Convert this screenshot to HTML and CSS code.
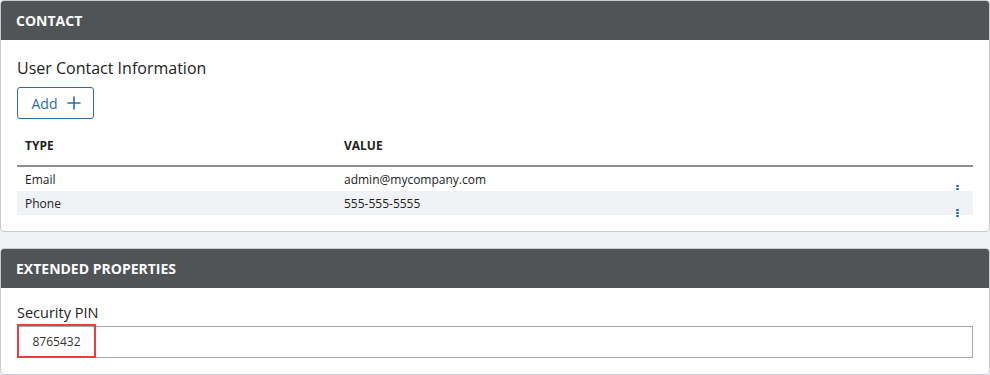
FILE: index.html
```html
<!DOCTYPE html>
<html lang="en">
  <head>
    <title>User Properties</title>
    <meta charset="utf-8" />
    <link rel="stylesheet" href="styles.css">
  </head>
  <body>
    <section class="panel contact">
      <h2 class="panel_title">CONTACT</h2>
      <div class="panel_body">
        <h3 class="sub_title">User Contact Information</h3>
        <button type="button" class="add_button">Add
          <svg class="plus" width="14" height="14" viewBox="0 0 14 14"><path d="M7 0.5V13.5M0.5 7H13.5" stroke="#2c6ca6" stroke-width="1.6" fill="none"/></svg>
        </button>
        <table class="contacts">
          <thead>
            <tr>
              <th class="col_type">TYPE</th>
              <th>VALUE</th>
              <th class="col_menu"></th>
            </tr>
          </thead>
          <tbody>
            <tr>
              <td>Email</td>
              <td>admin@mycompany.com</td>
              <td class="col_menu"><span class="kebab"><i></i><i></i><i></i></span></td>
            </tr>
            <tr class="alt">
              <td>Phone</td>
              <td>555-555-5555</td>
              <td class="col_menu"><span class="kebab"><i></i><i></i><i></i></span></td>
            </tr>
          </tbody>
        </table>
      </div>
    </section>

    <section class="panel extended">
      <h2 class="panel_title">EXTENDED PROPERTIES</h2>
      <div class="panel_body">
        <label class="field_label" for="pin">Security PIN</label>
        <div class="field">
          <span class="pin_value" id="pin">8765432</span>
        </div>
      </div>
    </section>
  </body>
</html>
```

FILE: styles.css
```css
body {
  margin: 0;
  width: 990px;
  background: #f1f2f6;
  font-family: "Open Sans", "Liberation Sans", sans-serif;
  color: #222;
}

.panel {
  background: #fff;
  border: 1px solid #c9cbd0;
  border-radius: 4px;
  overflow: hidden;
}

.contact {
  height: 232px;
  box-sizing: border-box;
}

.extended {
  margin-top: 16px;
  height: 127px;
  box-sizing: border-box;
}

.panel_title {
  margin: -1px -1px 0;
  height: 40px;
  padding: 0 16px;
  display: flex;
  align-items: center;
  background: #505457;
  color: #fff;
  font-size: 14px;
  font-weight: 700;
}

.panel_body {
  padding: 0 16px;
}

.sub_title {
  margin: 17px 0 0;
  font-size: 16px;
  font-weight: 400;
  line-height: 22px;
  color: #222;
}

.add_button {
  margin-top: 8px;
  width: 77px;
  height: 32px;
  border: 1px solid #2c6ca6;
  border-radius: 3px;
  background: #fff;
  color: #2c6ca6;
  font-family: inherit;
  font-size: 14px;
  padding: 0 0 0 2px;
  display: flex;
  align-items: center;
  justify-content: center;
  gap: 10px;
}

.contacts {
  width: 956px;
  margin-top: 14px;
  border-collapse: collapse;
  font-size: 12px;
}

.contacts th {
  text-align: left;
  font-weight: 700;
  font-size: 12px;
  line-height: 17px;
  height: 21px;
  padding: 0 8px 11px;
  vertical-align: bottom;
  border-bottom: 2px solid #8d8d95;
}

.contacts td {
  height: 24px;
  padding: 0 8px;
  vertical-align: middle;
}

.col_type {
  width: 303px;
}

.col_menu {
  width: 25px;
  position: relative;
}

.alt td {
  background: #f1f2f6;
}

.kebab {
  position: absolute;
  right: 14px;
  top: 18px;
  display: flex;
  flex-direction: column;
  gap: 1px;
}

.kebab i {
  display: block;
  width: 3px;
  height: 2px;
  border-radius: 1px;
  background: #1f68ad;
}

.field_label {
  display: block;
  margin-top: 15px;
  font-size: 14.5px;
  line-height: 20px;
}

.field {
  margin-top: 3px;
  height: 32px;
  box-sizing: border-box;
  border: 1px solid #a3a8b0;
  display: flex;
  align-items: center;
}

.pin_value {
  margin: -2px 0 0 -1px;
  width: 79px;
  height: 34px;
  box-sizing: border-box;
  border: 2px solid #ee3c3f;
  display: flex;
  align-items: center;
  justify-content: center;
  font-size: 12px;
  color: #333;
}
```
